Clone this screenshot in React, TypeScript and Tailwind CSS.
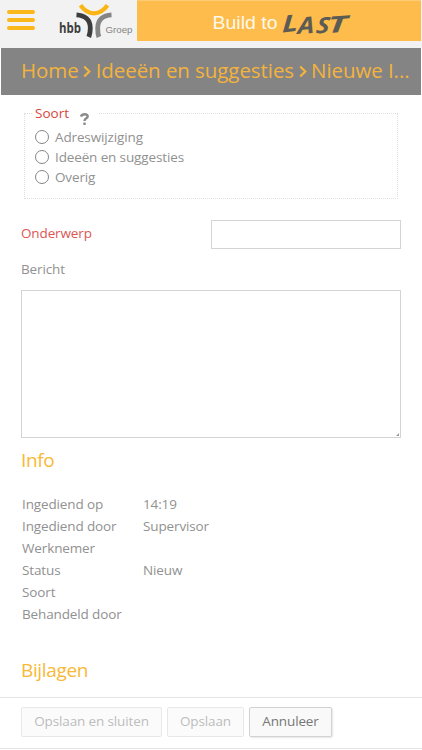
import React from "react";

const kinds = ["Adreswijziging", "Ideeën en suggesties", "Overig"];

const info: [string, string][] = [
  ["Ingediend op", "14:19"],
  ["Ingediend door", "Supervisor"],
  ["Werknemer", ""],
  ["Status", "Nieuw"],
  ["Soort", ""],
  ["Behandeld door", ""],
];

function Chevron() {
  return (
    <svg className="mx-[4.500px] mt-[2px] h-[13px] w-[8px] shrink-0" viewBox="0 0 8 13" fill="none" stroke="#f3b33d" strokeWidth="2.200">
      <path d="M1.200 1.500 6.300 6.500 1.200 11.500" />
    </svg>
  );
}

function Logo() {
  return (
    <svg className="h-[48px] w-[78px]" viewBox="0 0 78 48" fontFamily='"Open Sans", sans-serif'>
      <text x="0" y="32.500" fontSize="13.500" fontWeight="700" fill="#3d3d3d" textLength="22" lengthAdjust="spacingAndGlyphs">hbb</text>
      <path d="M17.500 14.800C25.500 15.300 31.300 19.500 31.300 28c0 4-.5 6.500-1.500 9" fill="none" stroke="#3d3d3d" strokeWidth="4.800" />
      <path d="M52.500 14.800C44.500 15.300 38.700 19.500 38.700 28c0 4 .2 6.500 1.200 9" fill="none" stroke="#858585" strokeWidth="4.800" />
      <path d="M21.500 5.300C25 10.300 29 13.300 35 13.300S45 10.300 48.500 5.300" fill="none" stroke="#fbb615" strokeWidth="4.200" />
      <text x="46.500" y="33" fontFamily='"Liberation Sans", sans-serif' fontSize="9.500" fill="#858585" textLength="27" lengthAdjust="spacingAndGlyphs">Groep</text>
    </svg>
  );
}

export default function App() {
  return (
    <div className="flex h-[750px] w-[422px] flex-col overflow-hidden bg-white font-['Open_Sans',sans-serif] text-[13.500px] tracking-[-0.130px] text-[#919191]">
      <header className="flex h-12 shrink-0 items-start bg-[#f2f2f2] tracking-normal">
        <button aria-label="Menu" className="ml-[7px] mt-[10px] flex w-7 flex-col gap-1">
          <span className="h-1 rounded-full bg-[#fbb81b]" />
          <span className="h-1 rounded-full bg-[#fbb81b]" />
          <span className="h-1 rounded-full bg-[#fbb81b]" />
        </button>
        <div className="ml-6 w-[78px]"><Logo /></div>
        <div className="h-[41px] w-[284px] border-t border-[#fccb76] bg-[#fdbc4b]">
          <svg className="h-[40px] w-full" viewBox="0 1 284 40">
            <text x="75.500" y="29" fontFamily='"Liberation Sans", sans-serif' fontSize="19" fill="#fff8e8" textLength="65" lengthAdjust="spacingAndGlyphs">Build to</text>
            <g fontFamily='"Open Sans", sans-serif' fontStyle="italic" fontWeight="700" fill="#5c5b54">
              <text transform="translate(145 32.500) rotate(-7) skewX(-8) scale(1.350 1)" fontSize="23">L</text>
              <text transform="translate(160.500 34) rotate(-4) skewX(-6) scale(1.150 1)" fontSize="23">A</text>
              <text transform="translate(178.500 33.500) rotate(-3) skewX(-10) scale(1.150 1)" fontSize="22">S</text>
              <text transform="translate(190.500 33) rotate(-4) skewX(-6) scale(1.650 1)" fontSize="22.500">T</text>
            </g>
          </svg>
        </div>
      </header>

      <nav className="mx-px flex h-[47px] shrink-0 items-center bg-[#848484] pb-[2px] pl-5 text-[20.500px] tracking-[-0.070px] whitespace-nowrap text-[#f3b33d]">
        <span>Home</span><Chevron /><span>Ideeën en suggesties</span><Chevron /><span>Nieuwe I...</span>
      </nav>

      <main className="flex h-[602px] shrink-0 flex-col px-[21px]">
        <fieldset className="mx-[3px] mt-[9px] h-[95px] border border-dotted border-[#dedede] px-[10px]">
          <legend className="-ml-[3px] flex h-[18px] w-[66px] items-center pl-[3px] tracking-normal text-[#d7443e]">
            <span className="pt-px">Soort</span>
            <svg className="relative top-[6px] ml-[11px] h-[12px] w-[9px]" viewBox="0 0 9 12" fill="none" stroke="#8b8b8b" strokeWidth="2.400">
              <path d="M1 3.500C1.600 1.900 2.700 1.200 4.500 1.200c2 0 3.200.9 3.200 2.300C7.700 5.400 4.500 5.300 4.500 8" />
              <path d="M4.500 9.500V12" />
            </svg>
          </legend>
          <div className="flex flex-col pt-[5px]">
            {kinds.map((kind) => (
              <label key={kind} className="flex h-5 items-center">
                <input type="radio" name="kind" className="mr-[6px] h-[14px] w-[14px] appearance-none rounded-full border border-[#858585]" />
                {kind}
              </label>
            ))}
          </div>
        </fieldset>

        <div className="mt-[21px] flex h-[29px] shrink-0 items-center justify-between">
          <label className="pb-[2px] text-[#dc5753]">Onderwerp</label>
          <input className="h-[29px] w-[190px] border border-[#d4d4d4] bg-white" />
        </div>
        <label className="mt-[10px] h-5 leading-5">Bericht</label>
        <div className="relative mt-[11px] h-[148px] w-[380px] shrink-0">
          <textarea className="block h-full w-full resize-none border border-[#d4d4d4] bg-white" />
          <svg className="absolute right-[2px] bottom-[2px] h-[3px] w-[3px]" viewBox="0 0 3 3"><path d="M3 0v3H0z" fill="#999" /></svg>
        </div>
        <h2 className="mt-[8px] h-7 shrink-0 text-[19px] leading-7 tracking-[-0.350px] text-[#f8b936]">Info</h2>
        <dl className="mt-[19px] ml-px shrink-0">
          {info.map(([term, value]) => (
            <div key={term} className="flex h-[22px] leading-[22px]">
              <dt className="w-[121px]">{term}</dt>
              <dd>{value}</dd>
            </div>
          ))}
        </dl>
        <h2 className="mt-[31px] h-7 shrink-0 text-[19px] leading-7 tracking-[-0.350px] text-[#f8b936]">Bijlagen</h2>
      </main>

      <footer className="flex h-[52px] shrink-0 items-start gap-[5px] border-t border-b border-[#e4e4e4] pl-[21px] pt-[9px]">
        <button disabled className="h-[30px] w-[141px] rounded-[2px] border border-[#e8e8e8] bg-[#fbfbfb] pb-[2px] text-[#bdbdbd]">Opslaan en sluiten</button>
        <button disabled className="h-[30px] w-[77px] rounded-[2px] border border-[#e8e8e8] bg-[#fbfbfb] pb-[2px] text-[#bdbdbd]">Opslaan</button>
        <button className="h-[30px] w-[83px] rounded-[2px] border border-[#d2d2d2] bg-[#f9f9f9] pb-[2px] tracking-[-0.130px] text-[#777] shadow-[1px_1px_2px_rgba(0,0,0,0.1)]">Annuleer</button>
      </footer>
    </div>
  );
}
